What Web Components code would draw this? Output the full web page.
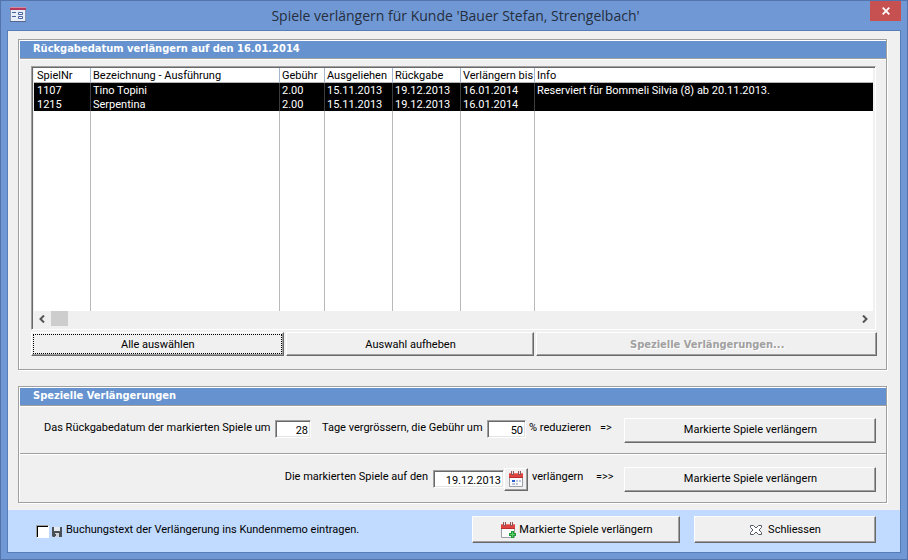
<!DOCTYPE html>
<html lang="de">
<head>
<meta charset="utf-8">
<title>Spiele verlängern</title>
<style>
html,body{margin:0;height:100%}
body{font:11px/14px Roboto,"Liberation Sans",sans-serif;color:#000;background:#6f98d5;
--face:#f0f0f0;--light:#fff;--shade:#a0a0a0;--dark:#696969;--bold:"DejaVu Sans Condensed","DejaVu Sans",sans-serif}
</style>
</head>
<body>
<app-window>
  <span slot="title">Spiele verlängern für Kunde 'Bauer Stefan, Strengelbach'</span>
  <group-frame>
    <span slot="heading">Rückgabedatum verlängern auf den 16.01.2014</span>
    <game-selection></game-selection>
  </group-frame>
  <group-frame>
    <span slot="heading">Spezielle Verlängerungen</span>
    <special-extensions></special-extensions>
  </group-frame>
  <action-footer slot="footer"></action-footer>
</app-window>

<script>
const define = (name, html) => {
  const template = document.createElement('template');
  template.innerHTML = '<style>*{box-sizing:border-box}:host{display:block;box-sizing:border-box}</style>' + html;
  customElements.define(name, class extends HTMLElement {
    constructor() {
      super();
      this.attachShadow({mode: 'open'}).append(template.content.cloneNode(true));
    }
  });
};

const fieldStyle = `
input.field{font:inherit;color:#000;background:#fff;height:18px;width:100%;margin:0;padding:2px 2px 0;text-align:right;border-radius:0;outline:0;
border:1px solid;border-color:var(--shade) var(--light) var(--light) var(--shade);
box-shadow:inset 1px 1px var(--dark),inset -1px -1px #e3e3e3}`;

const calendar = extra => `
<svg width="16" height="16" viewBox="0 0 16 16" aria-hidden="true">
<path d="M1.5 5h13v10.5h-13z" fill="#fbfbfc" stroke="#9a9fa6"/>
<path d="M1 2h14v4.500H1z" fill="#e0433f"/><path d="M1 2h14v1H1z" fill="#ee7771"/><path d="M1 6h14v1H1z" fill="#b92f2f"/>
<path d="M3 0h3v4H3zM10 0h3v4h-3z" fill="#8d5555"/><path d="M4 0h1v3H4zM11 0h1v3h-1z" fill="#f3dede"/>
${extra}</svg>`;

define('app-window', `
<style>
:host{display:flex;flex-direction:column;min-height:100vh;padding:0 6px 6px;background:#6f98d5;border:1px solid #5273ab}
header{display:grid;grid-template-columns:1fr auto 1fr;height:29px;padding-left:3px}
header>svg{margin-top:6px}
h1{margin:5px 0 0;font:14px/20px "Open Sans","Noto Sans",sans-serif;color:#262e3d}
button{justify-self:end;width:31px;height:20px;padding:0;border:0;background:#c75050;display:flex;align-items:center;justify-content:center}
main{flex:1;display:flex;flex-direction:column;border:1px solid #557db8;background:var(--face)}
.content{flex:1;display:flex;flex-direction:column;gap:16px;padding:8px 13px 7px 10px}
</style>
<header>
<svg width="16" height="16" viewBox="0 0 16 16" aria-hidden="true">
<path d="M0 0h16v15H0z" fill="#e8eef8"/><path d="M0 0h16v3H0z" fill="#b5395f"/><path d="M0 0h16v1H0z" fill="#d28aa0"/>
<path d="M0 3h1v12H0zM15 3h1v12h-1z" fill="#8795b5"/><path d="M0 14h16v1H0z" fill="#55658c"/>
<path d="M2 5h4v1H2zM2 9h4v1H2z" fill="#4a62a0"/>
<path d="M8.500 5.500h4v2h-4zM8.500 9.500h4v2h-4z" fill="#fff" stroke="#4a62a0"/>
</svg>
<h1><slot name="title"></slot></h1>
<button type="button" aria-label="Fenster schliessen"><svg width="8" height="8" viewBox="0 0 8 8"><path d="M.7.7l6.600 6.600M7.300.7L.7 7.300" stroke="#fff" stroke-width="1.800"/></svg></button>
</header>
<main><div class="content"><slot></slot></div><slot name="footer"></slot></main>`);

define('group-frame', `
<style>
:host{border:1px solid var(--shade);padding:1px 0 0 1px;box-shadow:inset 1px 1px var(--light),1px 1px var(--light)}
h2{margin:0 0 1px;height:18px;padding:1px 0 0 13px;background:#6693cf;color:#fff;font:bold 11px/14px var(--bold);
border-bottom:1px solid var(--shade);box-shadow:0 1px var(--light)}
</style>
<h2><slot name="heading"></slot></h2><slot></slot>`);

define('bevel-button', `
<style>
:host{min-width:0;height:25px}
:host([low]){height:24px}
:host([tall]){height:27px}
:host([square]){height:23px}
button{width:100%;height:100%;margin:0;padding:0 0 0 1px;font:inherit;color:#000;background:var(--face);border:1px solid;border-radius:0;
border-color:var(--light) var(--dark) var(--dark) var(--light);box-shadow:inset -1px -1px var(--shade);
display:flex;align-items:center;justify-content:center;gap:3px}
:host([low]) button{padding-top:1px}
:host([square]) button{padding:0 1px 0 0}
:host([current]) button{outline:1px dotted #000;outline-offset:-3px}
:host([inactive]) button{color:#a0a0a0;font:bold 11px/14px var(--bold);text-shadow:1px 1px #fff}
</style>
<button type="button"><slot></slot></button>`);

define('game-table', `
<style>
:host{border:1px solid;border-color:var(--shade) var(--light) var(--light) var(--shade);background:var(--face)}
.view{border:1px solid var(--dark);border-width:1px 0 0 1px;padding:0 2px 0 1px}
table{width:100%;table-layout:fixed;border-collapse:separate;border-spacing:0;background:#fff}
th,td{padding:1px 0 0 2px;height:14px;line-height:13px;font-weight:normal;text-align:left;white-space:nowrap;border-left:1px solid #b9b9b9}
th{height:15px;border-left-color:#a3b5cf;border-bottom:1px solid #b4b4b4}
tr>:first-child{border-left:0;padding-left:3px}
tbody td{background:#000;color:#fff;border-left-color:#3c3c3c}
tfoot td{height:200px}
.bar{display:flex;align-items:center;height:18px;padding:0 4px 3px}
.bar button{width:8px;height:15px;padding:0;border:0;background:none;display:flex;align-items:center}
.thumb{width:17px;height:15px;background:#cdcdcd;margin:0 auto 0 5px}
</style>
<div class="view">
<table>
<colgroup><col style="width:56px"><col style="width:189px"><col style="width:45px"><col style="width:68px"><col style="width:68px"><col style="width:74px"><col></colgroup>
<thead><tr><th>SpielNr</th><th>Bezeichnung - Ausführung</th><th>Gebühr</th><th>Ausgeliehen</th><th>Rückgabe</th><th>Verlängern bis</th><th>Info</th></tr></thead>
<tbody>
<tr><td>1107</td><td>Tino Topini</td><td>2.00</td><td>15.11.2013</td><td>19.12.2013</td><td>16.01.2014</td><td>Reserviert für Bommeli Silvia (8) ab 20.11.2013.</td></tr>
<tr><td>1215</td><td>Serpentina</td><td>2.00</td><td>15.11.2013</td><td>19.12.2013</td><td>16.01.2014</td><td></td></tr>
</tbody>
<tfoot><tr><td></td><td></td><td></td><td></td><td></td><td></td><td></td></tr></tfoot>
</table>
<div class="bar">
<button type="button" aria-label="Nach links"><svg width="8" height="8" viewBox="0 0 8 8"><path d="M6 .5L2.500 4L6 7.500" fill="none" stroke="#555" stroke-width="2"/></svg></button>
<div class="thumb"></div>
<button type="button" aria-label="Nach rechts"><svg width="8" height="8" viewBox="0 0 8 8"><path d="M2 .5L5.500 4L2 7.500" fill="none" stroke="#555" stroke-width="2"/></svg></button>
</div>
</div>`);

define('game-selection', `
<style>
:host{padding:6px 9px 13px 11px}
game-table{margin-right:1px}
.actions{display:grid;grid-template-columns:253fr 249fr 341fr;column-gap:2px;margin-top:2px}
</style>
<game-table></game-table>
<div class="actions">
<bevel-button low current>Alle auswählen</bevel-button>
<bevel-button low>Auswahl aufheben</bevel-button>
<bevel-button low inactive>Spezielle Verlängerungen...</bevel-button>
</div>`);

define('special-extensions', `
<style>
${fieldStyle}
.row{display:grid;align-items:center;padding:0 10px 0 24px;white-space:nowrap}
.days{height:47px;grid-template-columns:231px 47px 165px 42px 71px 24px 1fr;border-bottom:1px solid var(--shade)}
.date{height:48px;padding-top:2px;grid-template-columns:389px 71px 28px 64px 28px 1fr;box-shadow:inset 0 1px var(--light)}
.days .field{width:36px;margin-bottom:2px}
.days .pct{width:39px}
.date label:first-child{text-align:right;padding-right:5px}
.clip{width:21px;overflow:hidden}
label,.mark{margin-bottom:4px}
bevel-button[square]{width:24px}
</style>
<div class="row days">
<label for="days">Das Rückgabedatum der markierten Spiele um</label>
<input class="field" id="days" value="28">
<label for="pct">Tage vergrössern, die Gebühr um</label>
<input class="field pct" id="pct" value="50">
<label for="pct">% reduzieren</label>
<span class="mark">=&gt;</span>
<bevel-button>Markierte Spiele verlängern</bevel-button>
</div>
<div class="row date">
<label for="date">Die markierten Spiele auf den</label>
<input class="field" id="date" value="19.12.2013">
<bevel-button square>${calendar('<path d="M4 9h3v2H4z" fill="#2c5fd0"/><path d="M8 9h2v2H8zM11 9h2v2h-2zM4 12h3v2H4zM8 12h2v2H8z" fill="#b9c6dc"/>')}</bevel-button>
<label for="date">verlängern</label>
<span class="mark clip">=&gt;&gt;</span>
<bevel-button>Markierte Spiele verlängern</bevel-button>
</div>`);

define('action-footer', `
<style>
:host{display:flex;align-items:center;height:42px;padding:0 24px 3px 28px;background:#c0dbff}
input{appearance:none;width:13px;height:13px;margin:4px 3px 0 0;background:#fff;border:1px solid;border-radius:0;
border-color:var(--shade) var(--light) var(--light) var(--shade);box-shadow:inset 1px 1px #000}
label{display:flex;align-items:center;gap:4px;white-space:nowrap}
label svg{margin-top:4px}
.buttons{flex:1;display:grid;grid-template-columns:208fr 182fr;gap:14px;max-width:404px;margin-left:auto}
.close{margin-right:3px}
</style>
<input type="checkbox" id="memo">
<label for="memo"><svg width="10" height="10" viewBox="0 0 10 10" aria-hidden="true"><path d="M0 0h10v10H1L0 9z" fill="#4a5058"/><path d="M2 0h6v4H2z" fill="#e6eaee"/><path d="M3 6h4v4H3z" fill="#cfd4da"/><path d="M3 7h1v2H3z" fill="#4a5058"/></svg>Buchungstext der Verlängerung ins Kundenmemo eintragen.</label>
<div class="buttons">
<bevel-button tall>${calendar('<path d="M11 9h3v2h2v3h-2v2h-3v-2H9v-3h2z" fill="#1f9a35"/><path d="M12 10h1v2h2v1h-2v2h-1v-2h-2v-1h2z" fill="#5fd06a"/>')}Markierte Spiele verlängern</bevel-button>
<bevel-button tall><svg class="close" width="12" height="10" viewBox="0 0 12 10" aria-hidden="true"><path d="M.5.5h3L6 3l2.500-2.500h3v2L9 5l2.500 2.500v2h-3L6 7 3.500 9.500h-3v-2L3 5 .5 2.500z" fill="#fff" stroke="#555c66"/></svg>Schliessen</bevel-button>
</div>`);
</script>
</body>
</html>
